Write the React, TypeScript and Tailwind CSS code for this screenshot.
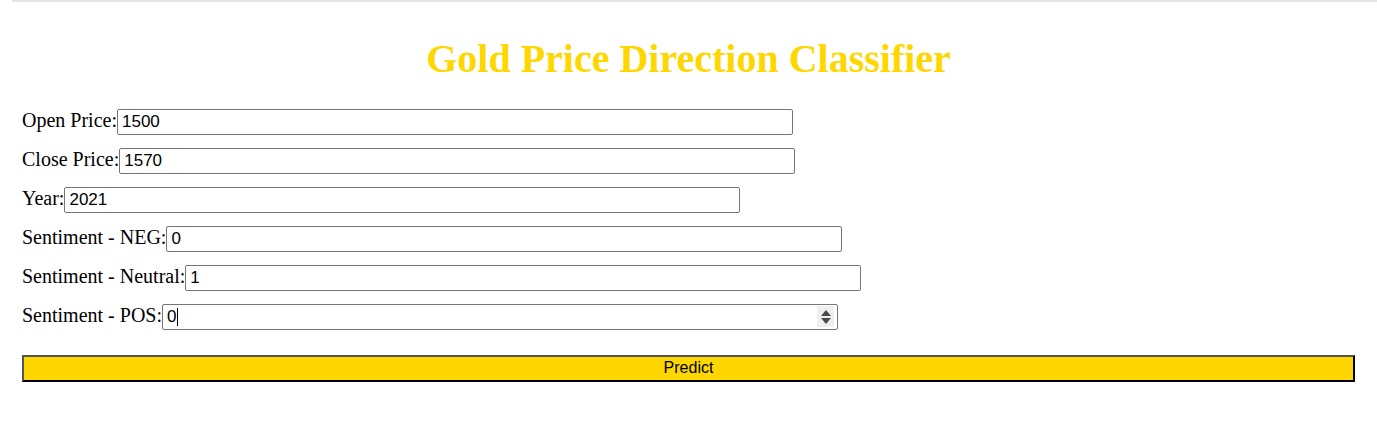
import React from 'react';

interface FieldProps {
  label: string;
  value: string;
  spinner?: boolean;
}

const Field: React.FC<FieldProps> = ({ label, value, spinner }) => (
  <div className="flex items-baseline">
    <label className="text-[20px] leading-[23px] text-black">{label}</label>
    <div className="relative">
      <input
        type="text"
        readOnly
        value={value}
        className="w-[676px] h-[26px] border border-[#767676] rounded-[2px] bg-white pl-[4px] text-[17px] text-black font-['Liberation_Sans',Arial,sans-serif] outline-none"
      />
      {spinner && (
        <>
          <span className="absolute left-[15px] top-[4px] w-px h-[18px] bg-black" />
          <span className="absolute right-[4px] top-[2px] w-[17px] h-[21px] bg-[#efefef] flex flex-col items-center justify-center gap-[2px]">
            <svg width="10" height="6" viewBox="0 0 10 6">
              <path d="M5 0L10 6H0z" fill="#4a4a4a" />
            </svg>
            <svg width="10" height="6" viewBox="0 0 10 6">
              <path d="M0 0H10L5 6z" fill="#4a4a4a" />
            </svg>
          </span>
        </>
      )}
    </div>
  </div>
);

const App: React.FC = () => {
  return (
    <div className="min-h-screen bg-white font-['Liberation_Serif','Times_New_Roman',serif]">
      <div className="ml-3 border-t-2 border-[#e4e4e4]" />
      <div className="px-[22px]">
        <h1 className="mt-[34px] text-center text-[40px] leading-[46px] font-bold text-[#FFD700]">
          Gold Price Direction Classifier
        </h1>

        <div className="mt-[27px] flex flex-col gap-[13px]">
          <Field label="Open Price:" value="1500" />
          <Field label="Close Price:" value="1570" />
          <Field label="Year:" value="2021" />
          <Field label="Sentiment - NEG:" value="0" />
          <Field label="Sentiment - Neutral:" value="1" />
          <Field label="Sentiment - POS:" value="0" spinner />
        </div>

        <button
          type="button"
          className="mt-[25px] w-full h-[27px] pb-[2px] bg-[#FFD700] border-2 border-t-[#555555] border-l-[#555555] border-b-black border-r-black text-[16px] leading-[18px] text-black font-['Liberation_Sans',Arial,sans-serif]"
        >
          Predict
        </button>
      </div>
    </div>
  );
};

export default App;
